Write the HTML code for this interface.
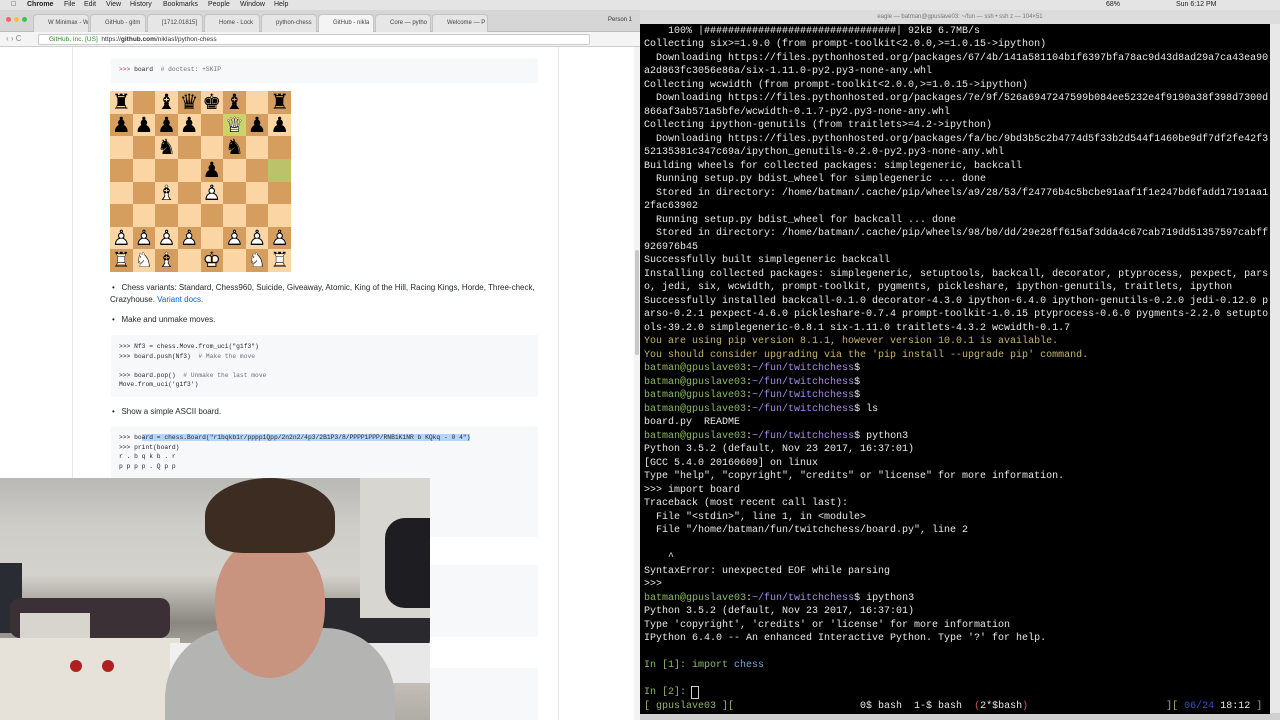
<!DOCTYPE html>
<html><head><meta charset="utf-8"><style>
*{margin:0;padding:0;box-sizing:border-box}
body{width:1280px;height:720px;overflow:hidden;background:#fff;position:relative;font-family:"Liberation Sans",sans-serif}
.abs{position:absolute}
#menubar{left:0;top:0;width:1280px;height:10px;background:#e4e4e4;font-size:7px;color:#222}
#menubar span{position:absolute;top:1px}
#tabs{left:0;top:10px;width:640px;height:22px;background:#d6d6d6;border-bottom:1px solid #bbb}
.tab{position:absolute;top:4px;height:18px;background:#e6e6e6;border:1px solid #c4c4c4;border-bottom:none;border-radius:4px 4px 0 0;font-size:6px;color:#444;padding:5px 0 0 14px;overflow:hidden;white-space:nowrap}
#addr{left:0;top:32px;width:640px;height:15px;background:#f4f4f4;border-bottom:1px solid #ccc}
#addr .box{position:absolute;left:38px;top:2px;width:552px;height:11px;background:#fff;border:1px solid #ccc;border-radius:2px;font-size:6.5px;color:#333;padding:1px 0 0 10px}
.code{position:absolute;left:111px;width:427px;background:#f6f8fa;font-family:"Liberation Mono",monospace;font-size:6.3px;color:#24292e;padding:7px 8px;line-height:9.5px;white-space:pre}
.txt{position:absolute;font-size:8px;color:#24292e;white-space:nowrap}
#term{left:640px;top:24px;width:630px;height:690px;background:#000;font-family:"Liberation Mono","DejaVu Sans Mono",monospace;font-size:10px;line-height:13.5px;color:#e8e8e8;white-space:pre;padding:0 0 0 4px;overflow:hidden}
.g{color:#8fb864}.p{color:#a98ae6}.y{color:#c8b56c}.b{color:#7aa6da}.r{color:#d05050}
#board{left:110px;top:91px;width:181px;height:181px}
.sq{position:absolute;width:22.625px;height:22.625px;font-family:"DejaVu Sans",sans-serif;font-size:21px;line-height:22px;text-align:center}
.w1{position:absolute;left:0;right:0;top:0;color:#fff}
.w2{position:absolute;left:0;right:0;top:0;color:#000}
</style></head><body>
<div id="menubar" class="abs">
<span style="left:11px;font-weight:bold">&#63743;</span><span style="left:27px;font-weight:bold">Chrome</span><span style="left:64px">File</span><span style="left:84px">Edit</span><span style="left:106px">View</span><span style="left:130px">History</span><span style="left:163px">Bookmarks</span><span style="left:208px">People</span><span style="left:240px">Window</span><span style="left:274px">Help</span>
<span style="left:1106px">68%</span><span style="left:1176px">Sun 6:12 PM</span>
</div>
<div id="tabs" class="abs">
<div class="abs" style="left:6px;top:7px;width:5px;height:5px;border-radius:50%;background:#fc605c"></div>
<div class="abs" style="left:14px;top:7px;width:5px;height:5px;border-radius:50%;background:#fdbc40"></div>
<div class="abs" style="left:22px;top:7px;width:5px;height:5px;border-radius:50%;background:#34c84a"></div>
<div class="tab" style="left:33px;width:56px">W Minimax - Wik</div>
<div class="tab" style="left:90px;width:56px">GitHub - gitm</div>
<div class="tab" style="left:147px;width:56px">[1712.01815]</div>
<div class="tab" style="left:204px;width:56px">Home - Lock</div>
<div class="tab" style="left:261px;width:56px">python-chess</div>
<div class="tab" style="left:318px;width:56px;background:#f4f4f4">GitHub - nikla</div>
<div class="tab" style="left:375px;width:56px">Core — pytho</div>
<div class="tab" style="left:432px;width:56px">Welcome — P</div>
<span class="abs" style="left:608px;top:7px;font-size:6px;color:#333">Person 1</span>
</div>
<div id="addr" class="abs"><span class="abs" style="left:6px;top:2px;font-size:8px;color:#888">‹ › C</span><div class="box"><span style="color:#2a8a2a">GitHub, Inc. [US]</span> &nbsp;https://<b>github.com</b>/niklasf/python-chess</div></div>
<div class="abs" style="left:72px;top:47px;width:1px;height:673px;background:#e8e8e8"></div>
<div class="abs" style="left:558px;top:47px;width:1px;height:673px;background:#e8e8e8"></div>
<div class="abs" style="left:634px;top:47px;width:6px;height:673px;background:#f4f4f4"></div>
<div class="abs" style="left:635px;top:250px;width:4px;height:105px;background:#c8c8c8;border-radius:2px"></div>

<div class="code" style="top:58px;height:25px"><span style="color:#b04040">&gt;&gt;&gt;</span> board  <span style="color:#6a737d"># doctest: +SKIP</span></div>
<div id="board" class="abs"></div>
<div class="txt" style="left:112px;top:283px">•&nbsp;&nbsp; Chess variants: Standard, Chess960, Suicide, Giveaway, Atomic, King of the Hill, Racing Kings, Horde, Three-check,</div>
<div class="txt" style="left:110px;top:295px">Crazyhouse. <span style="color:#0366d6">Variant docs</span>.</div>
<div class="txt" style="left:112px;top:315px">•&nbsp;&nbsp; Make and unmake moves.</div>
<div class="code" style="top:335px;height:62px">&gt;&gt;&gt; Nf3 = chess.Move.from_uci("g1f3")
&gt;&gt;&gt; board.push(Nf3)  <span style="color:#6a737d"># Make the move</span>

&gt;&gt;&gt; board.pop()  <span style="color:#6a737d"># Unmake the last move</span>
Move.from_uci('g1f3')</div>
<div class="txt" style="left:112px;top:407px">•&nbsp;&nbsp; Show a simple ASCII board.</div>
<div class="code" style="top:426px;height:111px">&gt;&gt;&gt; bo<span style="background:#b4d5fe">ard = chess.Board("r1bqkb1r/pppp1Qpp/2n2n2/4p3/2B1P3/8/PPPP1PPP/RNB1K1NR b KQkq - 0 4")</span>
&gt;&gt;&gt; print(board)
r . b q k b . r
p p p p . Q p p</div>
<div class="code" style="top:565px;height:72px"></div>
<div class="code" style="top:668px;height:52px"></div>

<div class="abs" style="left:0;top:478px;width:430px;height:242px;background:linear-gradient(#b8b8b4 0%,#cfcdc8 20%,#d4d2cc 40%,#8a8680 60%,#c8c4bc 80%,#b0aca6 100%);overflow:hidden">
<div class="abs" style="left:0;top:85px;width:22px;height:70px;background:#2a2c34"></div>
<div class="abs" style="left:10px;top:120px;width:160px;height:40px;background:#3a3036;border-radius:10px"></div>
<div class="abs" style="left:20px;top:135px;width:70px;height:28px;background:#d8d4ce"></div>
<div class="abs" style="left:0;top:160px;width:180px;height:82px;background:#e6e2da"></div>
<div class="abs" style="left:70px;top:182px;width:12px;height:12px;border-radius:50%;background:#b02020"></div>
<div class="abs" style="left:102px;top:182px;width:12px;height:12px;border-radius:50%;background:#b02020"></div>
<div class="abs" style="left:265px;top:120px;width:165px;height:60px;background:#2a2a2e;border-radius:20px"></div>
<div class="abs" style="left:300px;top:165px;width:130px;height:40px;background:#e8e8e8"></div>
<div class="abs" style="left:360px;top:0;width:70px;height:140px;background:#d8d6d0"></div>
<div class="abs" style="left:385px;top:40px;width:50px;height:90px;background:#1e1e22;border-radius:20px 0 0 20px"></div>
<div class="abs" style="left:170px;top:165px;width:150px;height:77px;background:#f0f0ee"></div>
<div class="abs" style="left:165px;top:150px;width:230px;height:110px;background:#b4b4b2;border-radius:70px 70px 0 0"></div>
<div class="abs" style="left:215px;top:60px;width:110px;height:140px;background:#c89480;border-radius:45% 45% 50% 50%"></div>
<div class="abs" style="left:205px;top:0px;width:130px;height:75px;background:#3c2c22;border-radius:50% 50% 30% 30%"></div>
</div>

<div class="abs" style="left:640px;top:10px;width:640px;height:14px;background:#dcdcdc;font-size:6px;color:#777;text-align:center;line-height:14px">eagle — batman@gpuslave03: ~/fun — ssh • ssh z — 104×51</div>
<div class="abs" style="left:1270px;top:24px;width:10px;height:696px;background:#e8e8e8"></div>
<div class="abs" style="left:640px;top:713px;width:640px;height:7px;background:#d0d0d0"></div>
<div id="term" class="abs"><div style="height:0.5px"></div>    100% |################################| 92kB 6.7MB/s
Collecting six&gt;=1.9.0 (from prompt-toolkit&lt;2.0.0,&gt;=1.0.15-&gt;ipython)
  Downloading https://files.pythonhosted.org/packages/67/4b/141a581104b1f6397bfa78ac9d43d8ad29a7ca43ea90
a2d863fc3056e86a/six-1.11.0-py2.py3-none-any.whl
Collecting wcwidth (from prompt-toolkit&lt;2.0.0,&gt;=1.0.15-&gt;ipython)
  Downloading https://files.pythonhosted.org/packages/7e/9f/526a6947247599b084ee5232e4f9190a38f398d7300d
866af3ab571a5bfe/wcwidth-0.1.7-py2.py3-none-any.whl
Collecting ipython-genutils (from traitlets&gt;=4.2-&gt;ipython)
  Downloading https://files.pythonhosted.org/packages/fa/bc/9bd3b5c2b4774d5f33b2d544f1460be9df7df2fe42f3
52135381c347c69a/ipython_genutils-0.2.0-py2.py3-none-any.whl
Building wheels for collected packages: simplegeneric, backcall
  Running setup.py bdist_wheel for simplegeneric ... done
  Stored in directory: /home/batman/.cache/pip/wheels/a9/28/53/f24776b4c5bcbe91aaf1f1e247bd6fadd17191aa1
2fac63902
  Running setup.py bdist_wheel for backcall ... done
  Stored in directory: /home/batman/.cache/pip/wheels/98/b0/dd/29e28ff615af3dda4c67cab719dd51357597cabff
926976b45
Successfully built simplegeneric backcall
Installing collected packages: simplegeneric, setuptools, backcall, decorator, ptyprocess, pexpect, pars
o, jedi, six, wcwidth, prompt-toolkit, pygments, pickleshare, ipython-genutils, traitlets, ipython
Successfully installed backcall-0.1.0 decorator-4.3.0 ipython-6.4.0 ipython-genutils-0.2.0 jedi-0.12.0 p
arso-0.2.1 pexpect-4.6.0 pickleshare-0.7.4 prompt-toolkit-1.0.15 ptyprocess-0.6.0 pygments-2.2.0 setupto
ols-39.2.0 simplegeneric-0.8.1 six-1.11.0 traitlets-4.3.2 wcwidth-0.1.7
<span class="y">You are using pip version 8.1.1, however version 10.0.1 is available.
You should consider upgrading via the 'pip install --upgrade pip' command.</span>
<span class="g">batman@gpuslave03</span>:<span class="p">~/fun/twitchchess</span>$
<span class="g">batman@gpuslave03</span>:<span class="p">~/fun/twitchchess</span>$
<span class="g">batman@gpuslave03</span>:<span class="p">~/fun/twitchchess</span>$
<span class="g">batman@gpuslave03</span>:<span class="p">~/fun/twitchchess</span>$ ls
board.py  README
<span class="g">batman@gpuslave03</span>:<span class="p">~/fun/twitchchess</span>$ python3
Python 3.5.2 (default, Nov 23 2017, 16:37:01)
[GCC 5.4.0 20160609] on linux
Type "help", "copyright", "credits" or "license" for more information.
&gt;&gt;&gt; import board
Traceback (most recent call last):
  File "&lt;stdin&gt;", line 1, in &lt;module&gt;
  File "/home/batman/fun/twitchchess/board.py", line 2

    ^
SyntaxError: unexpected EOF while parsing
&gt;&gt;&gt;
<span class="g">batman@gpuslave03</span>:<span class="p">~/fun/twitchchess</span>$ ipython3
Python 3.5.2 (default, Nov 23 2017, 16:37:01)
Type 'copyright', 'credits' or 'license' for more information
IPython 6.4.0 -- An enhanced Interactive Python. Type '?' for help.

<span class="g">In [1]: import</span> <span class="b">chess</span>

<span class="g">In [2]:</span> <span style="outline:1px solid #ccc"> </span>
<span class="g">[ gpuslave03 ][</span>                     0$ bash  1-$ bash  <span class="r">(</span>2*$bash<span class="r">)</span>                       <span class="g">][</span> <span style="color:#3050d0">06/24</span> 18:12 <span class="g">]</span></div>

<script>
var pos=["r.bqkb.r","pppp.Qpp","..n..n..","....p...","..B.P...","........","PPPP.PPP","RNB.K.NR"];
var blk={r:"♜",n:"♞",b:"♝",q:"♛",k:"♚",p:"♟"};
var wht={r:"♖",n:"♘",b:"♗",q:"♕",k:"♔",p:"♙"};
var h="";
for(var y=0;y<8;y++)for(var x=0;x<8;x++){
 var c=((x+y)%2==0)?"#fcd5a4":"#d69e5e";
 if(y==1&&x==5)c="#cdd26a";
 if(y==3&&x==7)c="#bcc26a";
 var ch=pos[y][x],inner="";
 if(ch!="."){
  var l=ch.toLowerCase();
  if(ch==l)inner='<span class="w2">'+blk[l]+'</span>';
  else inner='<span class="w1">'+blk[l]+'</span><span class="w2">'+wht[l]+'</span>';
 }
 h+='<div class="sq" style="left:'+(x*22.625)+'px;top:'+(y*22.625)+'px;background:'+c+'">'+inner+'</div>';
}
document.getElementById("board").innerHTML=h;
</script>
</body></html>
